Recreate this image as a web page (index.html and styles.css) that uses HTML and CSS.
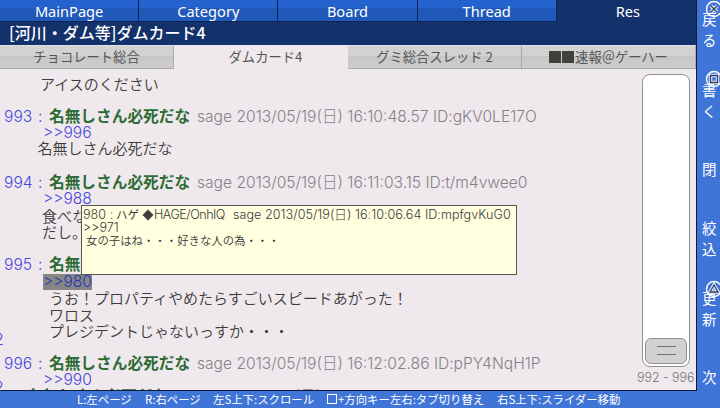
FILE: index.html
```html
<!DOCTYPE html>
<html lang="ja">
<head>
<meta charset="utf-8">
<title>ダムカード4</title>
<link rel="stylesheet" href="styles.css">
</head>
<body>
<div class="app">
  <main class="main">
    <nav class="nav">
      <span>MainPage</span><span>Category</span><span>Board</span><span>Thread</span><span class="current">Res</span>
    </nav>
    <h1 class="title">[河川・ダム等]ダムカード4</h1>
    <div class="tabs">
      <span>チョコレート総合</span><span class="active">ダムカード4</span><span>グミ総合スレッド 2</span><span><i class="block"></i><i class="block"></i>速報＠ゲーハー</span>
    </div>
    <div class="content">
      <div class="thread">
        <p class="row text in2">アイスのください</p>
        <p class="row"></p>
        <p class="row head"><span class="num">993</span><span class="colon">:</span><b>名無しさん必死だな</b><span class="meta">sage 2013/05/19(日) 16:10:48.57 ID:gKV0LE17O</span></p>
        <p class="row link wide">&gt;&gt;996</p>
        <p class="row text in1">名無しさん必死だな</p>
        <p class="row"></p>
        <p class="row head"><span class="num">994</span><span class="colon">:</span><b>名無しさん必死だな</b><span class="meta">sage 2013/05/19(日) 16:11:03.15 ID:t/m4vwee0</span></p>
        <p class="row link">&gt;&gt;988</p>
        <p class="row text in3">食べな</p>
        <p class="row text in3">だし。</p>
        <p class="row"></p>
        <p class="row head"><span class="num">995</span><span class="colon">:</span><b>名無</b></p>
        <p class="row link wide"><span class="selected">&gt;&gt;980</span></p>
        <p class="row text in4">うお！プロパティやめたらすごいスピードあがった！</p>
        <p class="row text in4">ワロス</p>
        <p class="row text in4">プレジデントじゃないっすか・・・</p>
        <p class="row"></p>
        <p class="row head"><span class="num">996</span><span class="colon">:</span><b>名無しさん必死だな</b><span class="meta">sage 2013/05/19(日) 16:12:02.86 ID:pPY4NqH1P</span></p>
        <p class="row link">&gt;&gt;990</p>
        <p class="row head next"><b>名無しさん必死だな</b><span class="meta">sage 2013/05/19(日) 16:12:05.31 ID:pPY4NqH1</span></p>
        <span class="stray s1">2</span><span class="stray s2">2</span>
      </div>
      <div class="slider">
        <div class="track"><div class="thumb"><i></i><i></i></div></div>
        <span class="range">992 - 996</span>
      </div>
      <div class="popup">
        <p class="phead"><span class="pnum">980 :</span><span class="pname">ハゲ</span><svg class="dia" viewBox="0 0 12 12"><path d="M6 .5 11.5 6 6 11.5 .5 6Z"/></svg><span class="trip">HAGE/OnhIQ</span><span>sage 2013/05/19(日) 16:10:06.64 ID:mpfgvKuG0</span></p>
        <p class="pref">&gt;&gt;971</p>
        <p class="ptext">女の子はね・・・好きな人の為・・・</p>
      </div>
    </div>
  </main>
  <aside class="side">
    <div class="cmd c1"><span>戻</span><span>る</span>
      <svg class="pad" viewBox="0 0 18 18"><circle cx="9" cy="9" r="7.5"/><path class="halo" d="M6 6l6 6M12 6l-6 6"/><path d="M6 6l6 6M12 6l-6 6"/></svg></div>
    <div class="cmd c2"><span>書</span><span>く</span>
      <svg class="pad" viewBox="0 0 18 18"><circle cx="9" cy="9" r="7.5"/><path class="halo" d="M5.5 5.5h7v7h-7z"/><path d="M5.5 5.5h7v7h-7z"/></svg></div>
    <div class="cmd c3"><span>閉</span></div>
    <div class="cmd c4"><span>絞</span><span>込</span></div>
    <div class="cmd c5"><span>更</span><span>新</span>
      <svg class="pad" viewBox="0 0 18 18"><circle cx="9" cy="9" r="7.5"/><path class="halo" d="M9 5l4 7H5z"/><path d="M9 5l4 7H5z"/></svg></div>
    <div class="cmd c6"><span>次</span></div>
  </aside>
  <footer class="footer">
    <span class="f1">L:左ページ</span><span class="f2">R:右ページ</span><span class="f3">左S上下:スクロール</span><span class="f4"><i class="key"></i>+方向キー左右:タブ切り替え</span><span class="f5">右S上下:スライダー移動</span>
  </footer>
</div>
</body>
</html>
```

FILE: styles.css
```css
* { box-sizing: border-box; }
html, body { margin: 0; }
body {
  width: 720px; height: 408px; overflow: hidden;
  font-family: Inter, "Noto Sans CJK JP", sans-serif; font-weight: 300;
}
p, h1 { margin: 0; }
.app {
  width: 720px; height: 408px; display: grid;
  grid-template-columns: 697px 23px; grid-template-rows: 391px 17px;
  background: #4075d8; overflow: hidden;
}
.main {
  display: grid; grid-template-rows: 22px 23px 23px 1fr; min-height: 0;
  background: #efe9ed; border-right: 1px solid #101c38; border-bottom: 1px solid #101c38;
}
.nav {
  display: grid; grid-template-columns: repeat(5, 1fr); background: #13316a;
  font-family: "Noto Sans", sans-serif; font-weight: 400; font-size: 14.6px; line-height: 20px; color: #fff;
}
.nav span {
  height: 22px; text-align: center; padding-top: 1px;
  border-right: 1px solid #0d2352; border-bottom: 1px solid #0d2352;
  background: linear-gradient(#2463cd 0 8px, #2059b9 8px);
}
.nav .current { background: none; border-color: transparent; padding-left: 4px; }
.title {
  height: 23px; padding-left: 9px; background: #13316a; color: #fff;
  font: 500 16px/20px "Noto Sans CJK JP", sans-serif;
}
.tabs {
  display: grid; grid-template-columns: 174px 174px 174px 1fr;
  font: 13.3px/22px "Noto Sans CJK JP", sans-serif; color: #555;
}
.tabs span {
  display: flex; align-items: center; justify-content: center; white-space: pre;
  background: linear-gradient(#d2d2d2 0 10px, #c6c6c6 10px, #cecece);
  border: solid #aaa; border-width: 1px 1px 1px 0; border-top-color: #e2e2e2;
}
.tabs .active { background: #efe9ed; border-color: #efe9ed; padding-left: 10px; }
.block { width: 12px; height: 12px; margin-right: 1px; background: #41413c; }
.content { position: relative; display: flex; min-height: 0; }
.thread { position: relative; width: 636px; height: 322px; padding-top: 8px; overflow: hidden; }
.row { height: 16.47px; line-height: 16.47px; font-size: 15.6px; white-space: pre; }
.text { font: 350 15px/15px "Noto Sans CJK JP", sans-serif; color: #3c3c3c; }
.in1 { padding-left: 37.5px; line-height: 12.5px; }
.in2 { padding-left: 40px; }
.in3 { padding-left: 42px; }
.in4 { padding-left: 49px; }
.head { display: flex; padding-left: 4px; }
.num { width: 34px; color: #4646dc; }
.colon { width: 11px; color: #4646dc; }
.head b { width: 148px; font: 700 15.7px/14.5px "Noto Sans CJK JP", sans-serif; color: #2e6b35; }
.meta { color: #858287; }
.link { padding-left: 43px; color: #4646dc; }
.selected { display: inline-block; height: 16px; background: #868686; color: #2438b0; }
.next { padding-left: 27px; }
.stray { position: absolute; left: -6px; font-size: 16px; line-height: 16px; color: #4646dc; }
.s1 { top: 263px; }
.s2 { top: 311px; }
.slider { width: 60px; padding-top: 6px; position: relative; }
.track {
  width: 48px; height: 293px; margin-left: 6px; padding: 2px; display: flex; align-items: flex-end;
  background: #fff; border: 1.5px solid #929092; border-radius: 8px;
}
.thumb {
  width: 100%; height: 26px; display: flex; flex-direction: column; align-items: center;
  justify-content: center; gap: 7px; padding-bottom: 2px; background: #d3d0d3; border: 1.5px solid #929092; border-radius: 6px;
}
.thumb i { width: 19px; height: 1px; background: #747274; }
.range { display: block; margin-top: 3px; margin-left: 1px; font-size: 12.4px; line-height: 16px; color: #777477; white-space: pre; }
.popup {
  position: absolute; left: 81px; top: 137px; width: 436px; height: 70px; padding: 2px 0 0 1px;
  background: #ffffdf; border: 1px solid #555; color: #3a3a3a; font-size: 12.6px; line-height: 13px;
}
.popup p { white-space: pre; }
.phead { display: flex; height: 13px; align-items: center; letter-spacing: .03px; }
.phead span { flex: none; }
.pnum { width: 33px; }
.pname { width: 26px; font: 11.5px/13px "Noto Sans CJK JP", sans-serif; }
.dia { flex: none; width: 12px; height: 12px; fill: #3e3e3e; }
.trip { width: 79px; letter-spacing: -.5px; }
.ptext { padding-left: 3px; font: 350 11.4px/13px "Noto Sans CJK JP", sans-serif; }
.side {
  grid-column: 2; grid-row: 1; display: flex; flex-direction: column; color: #fff;
  font: 14.5px/21px "Noto Sans CJK JP", sans-serif;
}
.cmd { position: relative; display: flex; flex-direction: column; padding-left: 5px; height: 70px; }
.c1 { padding-top: 8px; }
.c2 { padding-top: 9px; }
.c3 { padding-top: 18px; }
.c4 { padding-top: 7px; }
.c5 { padding-top: 7px; }
.c6 { padding-top: 16px; height: 41px; }
.pad { position: absolute; left: 8px; top: 0; width: 18px; height: 18px; fill: none; stroke: #fff; stroke-width: 1.4; }
.pad path { stroke: #33405e; stroke-width: 1.3; }
.pad .halo { stroke: #e8eefc; stroke-width: 3.4; }
.footer {
  grid-column: 1 / 3; grid-row: 2; display: flex; align-items: center; color: #fff;
  font: 11.4px/16px "Noto Sans CJK JP", sans-serif; white-space: pre; padding: 0 0 2px 77px;
}
.footer span { display: flex; align-items: center; flex: none; }
.f1, .f2 { width: 68px; }
.f3 { width: 113px; }
.f4 { width: 171px; }
.key { width: 10px; height: 10px; margin: 0 1px 0 1px; border: 1px solid #fff; }
```
